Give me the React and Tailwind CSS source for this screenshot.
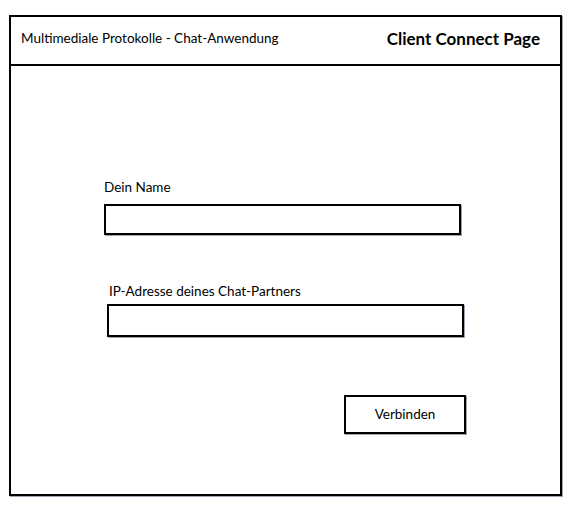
export default function App() {
  return (
    <div className="w-[574px] h-[509px] bg-white pt-[15px] pl-[9px] font-['Lato',sans-serif] text-black">
      <div className="w-[553px] h-[481px] border-2 border-black shadow-[1px_1px_0_#9ca3af] flex flex-col">
        <header className="h-[49px] border-b-2 border-black flex items-center justify-between pl-[10px] pr-[20px] pb-[4px]">
          <span className="text-[13.5px]">Multimediale Protokolle - Chat-Anwendung</span>
          <span className="text-[17px] font-bold">Client Connect Page</span>
        </header>

        <main className="flex flex-col pl-[93px] pt-[115px]">
          <label className="text-[13.5px] leading-none mb-[9px]">Dein Name</label>
          <input className="w-[357px] h-[31px] border-2 border-black shadow-[1px_1px_0_#9ca3af] outline-none" />

          <label className="text-[13.5px] leading-none mt-[50px] mb-[6px] ml-[5px]">IP-Adresse deines Chat-Partners</label>
          <input className="w-[357px] h-[33px] ml-[3px] border-2 border-black shadow-[1px_1px_0_#9ca3af] outline-none" />

          <button className="self-start ml-[240px] mt-[58px] w-[122px] h-[39px] border-2 border-black shadow-[1px_1px_0_#9ca3af] text-[13.5px]">
            Verbinden
          </button>
        </main>
      </div>
    </div>
  );
}
